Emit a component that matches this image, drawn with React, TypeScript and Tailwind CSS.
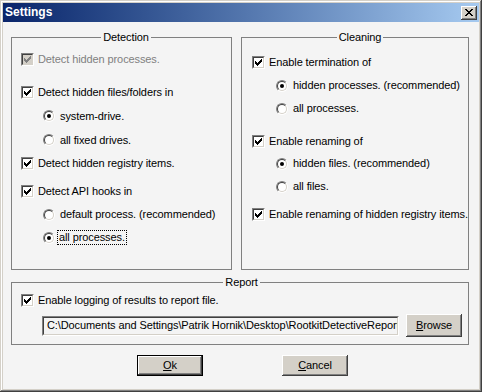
import React from 'react';

const raised =
  'shadow-[inset_-1px_-1px_#404040,inset_1px_1px_#ffffff,inset_-2px_-2px_#808080,inset_2px_2px_#d4d0c8]';

function CheckMark({ color }: { color: string }) {
  // classic 7x7 tick, one column of three pixels per step
  return (
    <svg width="7" height="7" viewBox="0 0 7 7" shapeRendering="crispEdges">
      {[2, 3, 4, 3, 2, 1, 0].map((y, x) => (
        <rect key={x} x={x} y={y} width="1" height="3" fill={color} />
      ))}
    </svg>
  );
}

function CheckBox({ checked, disabled }: { checked?: boolean; disabled?: boolean }) {
  return (
    <div className="flex w-[13px] h-[13px] shrink-0 border border-t-[#808080] border-l-[#808080] border-r-white border-b-white">
      <div
        className={`flex flex-1 items-center justify-center border border-t-[#404040] border-l-[#404040] border-r-[#d4d0c8] border-b-[#d4d0c8] ${
          disabled ? 'bg-[#d4d0c8]' : 'bg-white'
        }`}
      >
        {checked && <CheckMark color={disabled ? '#808080' : '#000000'} />}
      </div>
    </div>
  );
}

function Radio({ checked }: { checked?: boolean }) {
  return (
    <div className="flex w-[12px] h-[12px] shrink-0 rounded-full border border-t-[#808080] border-l-[#808080] border-r-white border-b-white">
      <div className="flex flex-1 items-center justify-center rounded-full bg-white border border-t-[#404040] border-l-[#404040] border-r-[#d4d0c8] border-b-[#d4d0c8]">
        {checked && <div className="w-[4px] h-[4px] rounded-full bg-black" />}
      </div>
    </div>
  );
}

function CheckRow({
  label,
  checked = true,
  disabled,
  className = 'h-[23px]'
}: {
  label: string;
  checked?: boolean;
  disabled?: boolean;
  className?: string;
}) {
  return (
    <div className={`flex items-center gap-[4px] whitespace-nowrap ${className}`}>
      <CheckBox checked={checked} disabled={disabled} />
      <span className={disabled ? 'text-[#808080]' : 'text-black'}>{label}</span>
    </div>
  );
}

function RadioRow({
  label,
  checked,
  focused,
  className = 'h-[23px]'
}: {
  label: string;
  checked?: boolean;
  focused?: boolean;
  className?: string;
}) {
  return (
    <div className={`flex items-center gap-[4px] whitespace-nowrap ${className}`}>
      <Radio checked={checked} />
      <span
        className={
          focused ? 'border border-dotted border-black px-[1px] -ml-[2px]' : 'border border-transparent'
        }
      >
        {label}
      </span>
    </div>
  );
}

function CloseButton() {
  return (
    <div className={`flex items-center justify-center w-[16px] h-[14px] bg-[#d4d0c8] ${raised}`}>
      <svg width="8" height="7" viewBox="0 0 8 7" shapeRendering="crispEdges">
        {[0, 1, 2, 3, 4, 5, 6].map((r) => (
          <g key={r}>
            <rect x={r} y={r} width="2" height="1" fill="#000" />
            <rect x={6 - r} y={r} width="2" height="1" fill="#000" />
          </g>
        ))}
      </svg>
    </div>
  );
}

function Button({
  children,
  isDefault,
  className = ''
}: {
  children: React.ReactNode;
  isDefault?: boolean;
  className?: string;
}) {
  return (
    <div
      className={`flex items-center justify-center bg-[#d4d0c8] ${raised} ${
        isDefault ? 'border border-black' : ''
      } ${className}`}
    >
      {children}
    </div>
  );
}

export default function App() {
  return (
    <div className="w-[482px] h-[392px] flex flex-col bg-[#d4d0c8] p-[3px] shadow-[inset_-1px_-1px_#404040,inset_1px_1px_#d4d0c8,inset_-2px_-2px_#808080,inset_2px_2px_#ffffff] font-['Liberation_Sans',Arial,sans-serif] text-[11px] leading-[13px] tracking-[-0.1px] text-black">
      {/* Title bar */}
      <div className="flex items-center justify-between h-[19px] pl-[2px] pr-[2px] bg-gradient-to-r from-[#0a246a] to-[#a6caf0]">
        <span className="font-bold text-[12px] tracking-normal text-white">Settings</span>
        <CloseButton />
      </div>

      {/* Client area */}
      <div className="flex flex-col flex-1 min-w-0 bg-[#f4f4f4] pl-[8px] pr-[10px] pt-[9px]">
        <div className="flex gap-[9px]">
          <fieldset className="w-[221px] min-w-0 h-[239px] border border-[#808080] pl-[9px] pt-[3px]">
            <legend className="mx-auto px-[2px] leading-[13px]">Detection</legend>
            <div className="flex flex-col">
              <CheckRow label="Detect hidden processes." disabled className="h-[24px]" />
              <CheckRow label="Detect hidden files/folders in" className="h-[24px] mt-[9px]" />
              <div className="flex flex-col pl-[22px]">
                <RadioRow label="system-drive." checked className="h-[24px]" />
                <RadioRow label="all fixed drives." className="h-[24px]" />
              </div>
              <CheckRow label="Detect hidden registry items." />
              <CheckRow label="Detect API hooks in" className="h-[23px] mt-[5px]" />
              <div className="flex flex-col pl-[22px]">
                <RadioRow label="default process. (recommended)" />
                <RadioRow label="all processes." checked focused />
              </div>
            </div>
          </fieldset>

          <fieldset className="w-[228px] min-w-0 h-[239px] border border-[#808080] pl-[10px] pt-[7px]">
            <legend className="mx-auto px-[2px] leading-[13px]">Cleaning</legend>
            <div className="flex flex-col">
              <CheckRow label="Enable termination of" />
              <div className="flex flex-col pl-[24px]">
                <RadioRow label="hidden processes. (recommended)" checked />
                <RadioRow label="all processes." />
              </div>
              <CheckRow label="Enable renaming of" className="h-[22px] mt-[10px]" />
              <div className="flex flex-col pl-[24px]">
                <RadioRow label="hidden files. (recommended)" checked />
                <RadioRow label="all files." />
              </div>
              <CheckRow label="Enable renaming of hidden registry items." className="h-[23px] mt-[5px]" />
            </div>
          </fieldset>
        </div>

        <fieldset className="mt-[6px] min-w-0 border border-[#808080] pl-[9px] pr-[6px] pb-[7px]">
          <legend className="mx-auto px-[2px] leading-[13px]">Report</legend>
          <CheckRow label="Enable logging of results to report file." />
          <div className="flex items-center gap-[7px] mt-[2px] pl-[21px] h-[23px]">
            <div className="flex flex-1 min-w-0 h-[20px] border border-t-[#808080] border-l-[#808080] border-r-white border-b-white">
              <div className="flex flex-1 min-w-0 items-center overflow-hidden whitespace-nowrap bg-[#f4f4f4] pl-[3px] border border-t-[#404040] border-l-[#404040] border-r-[#d4d0c8] border-b-[#d4d0c8]">
                C:\Documents and Settings\Patrik Hornik\Desktop\RootkitDetectiveReport.txt
              </div>
            </div>
            <Button className="w-[56px] h-[23px] shrink-0">
              <span>
                <span className="underline">B</span>rowse
              </span>
            </Button>
          </div>
        </fieldset>

        <div className="flex mt-[10px] pl-[126px] gap-[79px]">
          <Button isDefault className="w-[66px] h-[21px]">
            <span>
              <span className="underline">O</span>k
            </span>
          </Button>
          <Button className="w-[66px] h-[21px]">
            <span>
              <span className="underline">C</span>ancel
            </span>
          </Button>
        </div>
      </div>
    </div>
  );
}
